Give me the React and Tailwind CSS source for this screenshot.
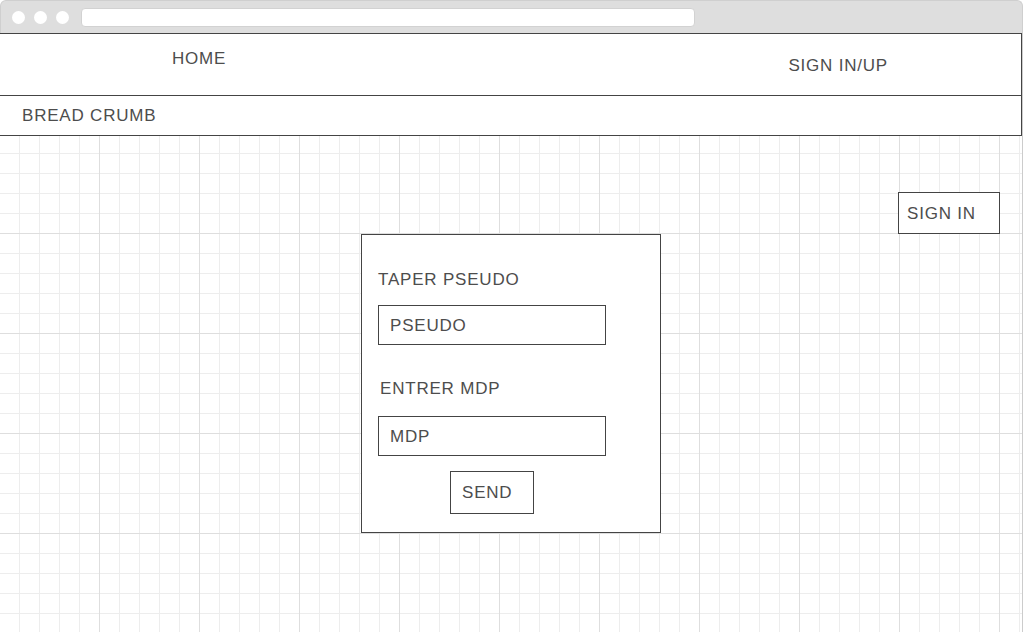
export default function App() {
  return (
    <div className="h-[632px] w-[1023px] overflow-hidden bg-white font-['Liberation_Sans',Arial,sans-serif] text-[17px] leading-[20px] tracking-[0.8px] text-[#4d4d4d]">
      {/* browser chrome */}
      <div className="flex h-[33px] items-center rounded-t-[6px] border border-b-0 border-[#cfcfcf] bg-[#dedede] pl-[11px]">
        <div className="flex gap-[9px]">
          <span className="size-[13px] rounded-full bg-white" />
          <span className="size-[13px] rounded-full bg-white" />
          <span className="size-[13px] rounded-full bg-white" />
        </div>
        <div className="ml-[12px] h-[19px] w-[614px] rounded-[4px] border border-[#d2d2d2] bg-white" />
      </div>

      <div className="h-[599px] border-r border-[#cccccc] bg-white bg-[linear-gradient(to_right,#dedede_1px,transparent_1px),linear-gradient(to_bottom,#dedede_1px,transparent_1px),linear-gradient(to_right,#ededed_1px,transparent_1px),linear-gradient(to_bottom,#ededed_1px,transparent_1px)] bg-size-[100px_100px,100px_100px,20px_20px,20px_20px] bg-position-[-1px_0]">
        {/* header */}
        <header className="flex h-[63px] items-start justify-between border-y border-r border-[#444] bg-white pl-[172px] pr-[133px]">
          <a className="mt-[15px]">HOME</a>
          <a className="mt-[22px]">SIGN IN/UP</a>
        </header>
        <div className="flex h-[40px] items-center border-b border-r border-[#444] bg-white pl-[22px]">
          BREAD CRUMB
        </div>

        <main className="pt-[56px]">
          <div className="flex justify-end pr-[22px]">
            <button className="flex h-[42px] w-[102px] items-center border border-[#444] bg-white pl-[8px] pt-[1px] tracking-[0.8px] text-[#4d4d4d]">
              SIGN IN
            </button>
          </div>

          <form className="ml-[361px] flex h-[299px] w-[300px] flex-col items-start border border-[#444] bg-white pl-[16px] pt-[35px]">
            <label>TAPER PSEUDO</label>
            <div className="mt-[15px] flex h-[40px] w-[228px] items-center border border-[#444] pl-[11px] pt-[1px]">
              PSEUDO
            </div>
            <label className="ml-[2px] mt-[34px]">ENTRER MDP</label>
            <div className="mt-[17px] flex h-[40px] w-[228px] items-center border border-[#444] pl-[11px] pt-[1px]">
              MDP
            </div>
            <button
              type="button"
              className="ml-[72px] mt-[15px] flex h-[43px] w-[84px] items-center border border-[#444] pl-[11px] tracking-[0.8px] text-[#4d4d4d]"
            >
              SEND
            </button>
          </form>
        </main>
      </div>
    </div>
  );
}
